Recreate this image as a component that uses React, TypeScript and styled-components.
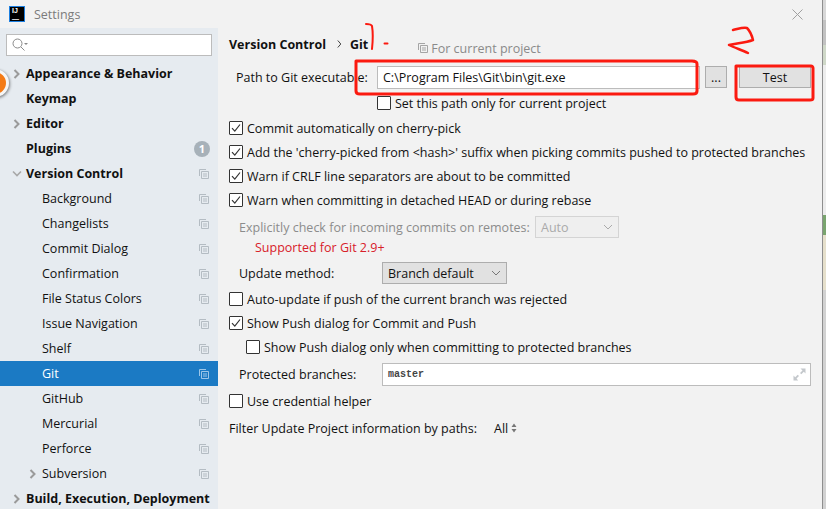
import React from "react";
import styled, { createGlobalStyle } from "styled-components";

const GlobalStyle = createGlobalStyle`
  html, body {
    margin: 0;
    padding: 0;
    background: #f2f2f2;
    overflow: hidden;
  }
  body {
    font-family: "Open Sans", "Noto Sans", "Liberation Sans", sans-serif;
    font-size: 12.5px;
    color: #111;
  }
`;

const Screen = styled.div`
  position: relative;
  display: flex;
  width: 826px;
  height: 509px;
  overflow: hidden;
`;

const Dialog = styled.div`
  display: flex;
  flex-direction: column;
  width: 822px;
  height: 509px;
  background: #f2f2f2;
`;

const TitleBar = styled.div`
  display: flex;
  align-items: center;
  height: 28px;
  padding: 0 19px 0 9px;
  flex-shrink: 0;
`;

const Logo = styled.div`
  width: 16px;
  height: 16px;
  box-sizing: border-box;
  background: #000;
  border: 1px solid #1d7fe0;
  color: #fff;
  font: bold 7px "Liberation Sans", sans-serif;
  line-height: 8px;
  padding-left: 2px;
  overflow: hidden;
`;

const TitleText = styled.span`
  margin-left: 9px;
  color: #7b7b7b;
  font-size: 12.5px;
`;

const CloseBox = styled.div`
  margin-left: auto;
  display: flex;
`;

const Body = styled.div`
  display: flex;
  flex: 1;
  min-height: 0;
`;

const Sidebar = styled.aside`
  width: 218px;
  flex-shrink: 0;
  background: #e6ebf0;
  padding-top: 6px;
  overflow: hidden;
`;

const Search = styled.div`
  display: flex;
  align-items: center;
  box-sizing: border-box;
  height: 22px;
  margin: 0 6px 5px;
  padding-left: 5px;
  background: #fff;
  border: 1px solid #bcbcbc;
`;

const TreeRow = styled.div<{ $indent: number; $selected?: boolean }>`
  display: flex;
  align-items: center;
  height: 25px;
  padding-left: ${(p) => p.$indent}px;
  padding-right: 9px;
  background: ${(p) => (p.$selected ? "#1b7ac4" : "transparent")};
  color: ${(p) => (p.$selected ? "#fff" : "#111")};
  white-space: nowrap;
`;

const Arrow = styled.span`
  display: flex;
  width: 14px;
  justify-content: center;
  margin-right: 2px;
  flex-shrink: 0;
`;

const TreeLabel = styled.span<{ $bold?: boolean }>`
  flex: 1;
  font-weight: ${(p) => (p.$bold ? 700 : 400)};
`;

const Badge = styled.span`
  display: flex;
  align-items: center;
  justify-content: center;
  width: 16px;
  height: 16px;
  margin-right: -1px;
  border-radius: 50%;
  background: #a7b1b9;
  color: #fff;
  font-size: 11px;
  font-weight: 700;
`;

const Main = styled.main`
  flex: 1;
  display: flex;
  flex-direction: column;
  padding-left: 11px;
  min-width: 0;
`;

const Breadcrumb = styled.div`
  display: flex;
  align-items: center;
  height: 24px;
  margin-top: 4px;
  white-space: nowrap;
`;

const Crumb = styled.span`
  font-weight: 700;
`;

const Chevron = styled.span`
  display: flex;
  margin: 0 8px 0 11px;
`;

const ProjectNote = styled.span`
  display: flex;
  align-items: center;
  gap: 3px;
  margin-left: 50px;
  margin-top: 8px;
  color: #8a8a8a;
`;

const Row = styled.div<{ $height?: number; $indent?: number; $top?: number }>`
  display: flex;
  align-items: center;
  height: ${(p) => p.$height ?? 24}px;
  margin-top: ${(p) => p.$top ?? 0}px;
  padding-left: ${(p) => p.$indent ?? 0}px;
  white-space: nowrap;
`;

const FieldLabel = styled.span<{ $width?: number; $left?: number; $muted?: boolean }>`
  width: ${(p) => (p.$width ? `${p.$width}px` : "auto")};
  margin-left: ${(p) => p.$left ?? 10}px;
  flex-shrink: 0;
  color: ${(p) => (p.$muted ? "#8c8c8c" : "#111")};
`;

const TextField = styled.div<{ $width: number }>`
  display: flex;
  align-items: center;
  justify-content: space-between;
  box-sizing: border-box;
  width: ${(p) => p.$width}px;
  height: 23px;
  padding: 0 4px 0 5px;
  background: #fff;
  border: 1px solid #bcbcbc;
`;

const MonoText = styled.span`
  font-family: "Liberation Mono", monospace;
  font-size: 10px;
  font-weight: 700;
  color: #444;
`;

const Button = styled.div<{ $width: number; $left: number }>`
  display: flex;
  align-items: center;
  justify-content: center;
  box-sizing: border-box;
  width: ${(p) => p.$width}px;
  height: 22px;
  margin-left: ${(p) => p.$left}px;
  background: #e1e1e1;
  border: 1px solid #adadad;
`;

const Select = styled.div<{ $width: number; $disabled?: boolean }>`
  display: flex;
  align-items: center;
  justify-content: space-between;
  box-sizing: border-box;
  width: ${(p) => p.$width}px;
  height: 22px;
  padding: 0 5px;
  background: ${(p) => (p.$disabled ? "#efefef" : "#e1e1e1")};
  border: 1px solid ${(p) => (p.$disabled ? "#d4d4d4" : "#adadad")};
  color: ${(p) => (p.$disabled ? "#aaa" : "#111")};
`;

const Box = styled.span`
  display: flex;
  box-sizing: border-box;
  width: 14px;
  height: 14px;
  flex-shrink: 0;
  background: #fff;
  border: 1px solid #333;
  border-radius: 1px;
`;

const CheckText = styled.span`
  margin-left: 4px;
`;

const Warning = styled.span`
  margin-left: 26px;
  color: #d8202a;
`;

const AllValue = styled.span`
  margin-left: 10px;
`;

const SortIcon = styled.svg`
  margin-left: 3px;
`;

const Strip = styled.div`
  display: flex;
  flex-direction: column;
  width: 4px;
  height: 509px;
  background: #8f8f8f;
`;

const StripPart = styled.div<{ $h: number; $c: string }>`
  height: ${(p) => p.$h}px;
  margin-left: 1px;
  background: ${(p) => p.$c};
  flex-shrink: 0;
`;

const StatusBadge = styled.div`
  position: absolute;
  left: -19px;
  top: 69px;
  width: 28px;
  height: 28px;
  box-sizing: border-box;
  border-radius: 50%;
  background: #f47b16;
  border: 3px solid #f6f6f6;
  box-shadow: 1px 1px 3px rgba(0, 0, 0, 0.45);
`;

const Annotations = styled.svg`
  position: absolute;
  left: 0;
  top: 0;
  pointer-events: none;
`;

const CopyIcon = ({ color = "#b4bcc3" }: { color?: string }) => (
  <svg width="10" height="10" viewBox="0 0 10 10" fill="none" stroke={color} strokeWidth="1">
    <path d="M0.5 7V0.5H7" />
    <path d="M2.5 2.5h7v7h-7z" />
    <path d="M4 5h4M4 7h4" />
  </svg>
);

const ArrowRight = () => (
  <svg width="8" height="10" viewBox="0 0 8 10" fill="none" stroke="#9a9a9a" strokeWidth="2">
    <path d="M1.5 1l4 4-4 4" />
  </svg>
);

const ArrowDown = () => (
  <svg width="10" height="8" viewBox="0 0 10 8" fill="none" stroke="#a8a8a8" strokeWidth="1.6">
    <path d="M1 1.5l4 4 4-4" />
  </svg>
);

const SelectCaret = ({ color = "#777" }: { color?: string }) => (
  <svg width="10" height="6" viewBox="0 0 10 6" fill="none" stroke={color} strokeWidth="1">
    <path d="M1 1l4 4 4-4" />
  </svg>
);

const Check = ({ checked, label }: { checked?: boolean; label: string }) => (
  <>
    <Box>
      {checked && (
        <svg width="12" height="12" viewBox="0 0 12 12" fill="none" stroke="#333" strokeWidth="1.2">
          <path d="M2 6.2l2.8 3L10 2.5" />
        </svg>
      )}
    </Box>
    <CheckText>{label}</CheckText>
  </>
);

type TreeItem = {
  label: string;
  indent: number;
  bold?: boolean;
  arrow?: "right" | "down";
  copy?: boolean;
  selected?: boolean;
  badge?: string;
};

const tree: TreeItem[] = [
  { label: "Appearance & Behavior", indent: 10, bold: true, arrow: "right" },
  { label: "Keymap", indent: 26, bold: true },
  { label: "Editor", indent: 10, bold: true, arrow: "right" },
  { label: "Plugins", indent: 26, bold: true, badge: "1" },
  { label: "Version Control", indent: 10, bold: true, arrow: "down", copy: true },
  { label: "Background", indent: 42, copy: true },
  { label: "Changelists", indent: 42, copy: true },
  { label: "Commit Dialog", indent: 42, copy: true },
  { label: "Confirmation", indent: 42, copy: true },
  { label: "File Status Colors", indent: 42, copy: true },
  { label: "Issue Navigation", indent: 42, copy: true },
  { label: "Shelf", indent: 42, copy: true },
  { label: "Git", indent: 42, copy: true, selected: true },
  { label: "GitHub", indent: 42, copy: true },
  { label: "Mercurial", indent: 42, copy: true },
  { label: "Perforce", indent: 42, copy: true },
  { label: "Subversion", indent: 26, arrow: "right", copy: true },
  { label: "Build, Execution, Deployment", indent: 10, bold: true, arrow: "right" },
];

export default function App() {
  return (
    <Screen>
      <GlobalStyle />
      <Dialog>
        <TitleBar>
          <Logo>
            IJ
            <br />—
          </Logo>
          <TitleText>Settings</TitleText>
          <CloseBox>
            <svg width="11" height="11" viewBox="0 0 11 11" stroke="#a0a0a0" strokeWidth="1">
              <path d="M0.5 0.5l10 10M10.5 0.5l-10 10" />
            </svg>
          </CloseBox>
        </TitleBar>
        <Body>
          <Sidebar>
            <Search>
              <svg width="16" height="14" viewBox="0 0 16 14" fill="none" stroke="#8a8a8a" strokeWidth="1">
                <circle cx="5.5" cy="5.5" r="4.5" />
                <path d="M9 9l3.5 3.5" />
                <path d="M12 5h4l-2 2z" fill="#8a8a8a" stroke="none" />
              </svg>
            </Search>
            {tree.map((item) => (
              <TreeRow key={item.label} $indent={item.indent} $selected={item.selected}>
                {item.arrow && <Arrow>{item.arrow === "right" ? <ArrowRight /> : <ArrowDown />}</Arrow>}
                <TreeLabel $bold={item.bold}>{item.label}</TreeLabel>
                {item.copy && <CopyIcon color={item.selected ? "#9cc6e8" : undefined} />}
                {item.badge && <Badge>{item.badge}</Badge>}
              </TreeRow>
            ))}
          </Sidebar>
          <Main>
            <Breadcrumb>
              <Crumb>Version Control</Crumb>
              <Chevron>
                <svg width="5" height="8" viewBox="0 0 5 8" fill="none" stroke="#444" strokeWidth="1">
                  <path d="M0.8 0.5l3 3.5-3 3.5" />
                </svg>
              </Chevron>
              <Crumb>Git</Crumb>
              <ProjectNote>
                <CopyIcon color="#a5a5a5" />
                For current project
              </ProjectNote>
            </Breadcrumb>
            <Row $height={26} $top={8}>
              <FieldLabel $width={141} $left={7}>Path to Git executable:</FieldLabel>
              <TextField $width={323}>C:\Program Files\Git\bin\git.exe</TextField>
              <Button $width={22} $left={5}>...</Button>
              <Button $width={72} $left={12}>Test</Button>
            </Row>
            <Row $height={26} $indent={148}>
              <Check label="Set this path only for current project" />
            </Row>
            <Row><Check checked label="Commit automatically on cherry-pick" /></Row>
            <Row><Check checked label="Add the 'cherry-picked from <hash>' suffix when picking commits pushed to protected branches" /></Row>
            <Row><Check checked label="Warn if CRLF line separators are about to be committed" /></Row>
            <Row><Check checked label="Warn when committing in detached HEAD or during rebase" /></Row>
            <Row $top={3}>
              <FieldLabel $width={296} $muted>Explicitly check for incoming commits on remotes:</FieldLabel>
              <Select $width={84} $disabled>Auto<SelectCaret color="#aaa" /></Select>
            </Row>
            <Row $height={16}><Warning>Supported for Git 2.9+</Warning></Row>
            <Row $height={36}>
              <FieldLabel $width={143}>Update method:</FieldLabel>
              <Select $width={125}>Branch default<SelectCaret /></Select>
            </Row>
            <Row $height={16}><Check label="Auto-update if push of the current branch was rejected" /></Row>
            <Row $height={32}><Check checked label="Show Push dialog for Commit and Push" /></Row>
            <Row $height={16} $indent={17}><Check label="Show Push dialog only when committing to protected branches" /></Row>
            <Row $height={38}>
              <FieldLabel $width={143}>Protected branches:</FieldLabel>
              <TextField $width={429}>
                <MonoText>master</MonoText>
                <svg width="13" height="13" viewBox="0 0 13 13" fill="#c4c8cc" stroke="none">
                  <path d="M7.5 0.5h5v5l-1.7-1.7-2.5 2.5-1.3-1.3 2.5-2.5z" />
                  <path d="M0.5 12.5v-5l1.7 1.7 2.5-2.5 1.3 1.3-2.5 2.5 1.7 2z" />
                </svg>
              </TextField>
            </Row>
            <Row $height={16}><Check label="Use credential helper" /></Row>
            <Row $height={38}>
              <FieldLabel $width={255} $left={0}>Filter Update Project information by paths:</FieldLabel>
              <AllValue>All</AllValue>
              <SortIcon width="6" height="10" viewBox="0 0 6 10" fill="#777">
                <path d="M3 0.5l2.5 3.5h-5zM3 9.5l-2.5-3.5h5z" />
              </SortIcon>
            </Row>
          </Main>
        </Body>
      </Dialog>
      <Strip>
        <StripPart $h={20} $c="#d8d8d8" />
        <StripPart $h={25} $c="#c2c2c2" />
        <StripPart $h={20} $c="#cfd8c8" />
        <StripPart $h={150} $c="#ededed" />
        <StripPart $h={20} $c="#7aa56f" />
        <StripPart $h={55} $c="#e6e0cc" />
        <StripPart $h={219} $c="#d2d2d2" />
      </Strip>
      <StatusBadge />
      <Annotations width="826" height="509" viewBox="0 0 826 509" fill="none" stroke="#fb1a10" strokeLinecap="round" strokeLinejoin="round">
        <path d="M366 24c3 0 5 0 6 2 1 6 1 14 0 23" strokeWidth="2" />
        <path d="M384.5 43.5h3" strokeWidth="2" />
        <path d="M356 61h3 333c3 0 5 1 5 3v27c0 2-2 3-4 3H360c-3 0-4-1-4-3z" strokeWidth="3" />
        <path d="M736 66h75c1 0 2 1 2 2v30c0 1-1 2-3 2h-71c-2 0-3-1-3-3z" strokeWidth="3" />
        <path d="M733 30c5-1 10-3 14-2 3 3 5 8 6 12-8 3-16 3-24 5 6 3 13 5 19 8" strokeWidth="2.5" />
      </Annotations>
    </Screen>
  );
}
